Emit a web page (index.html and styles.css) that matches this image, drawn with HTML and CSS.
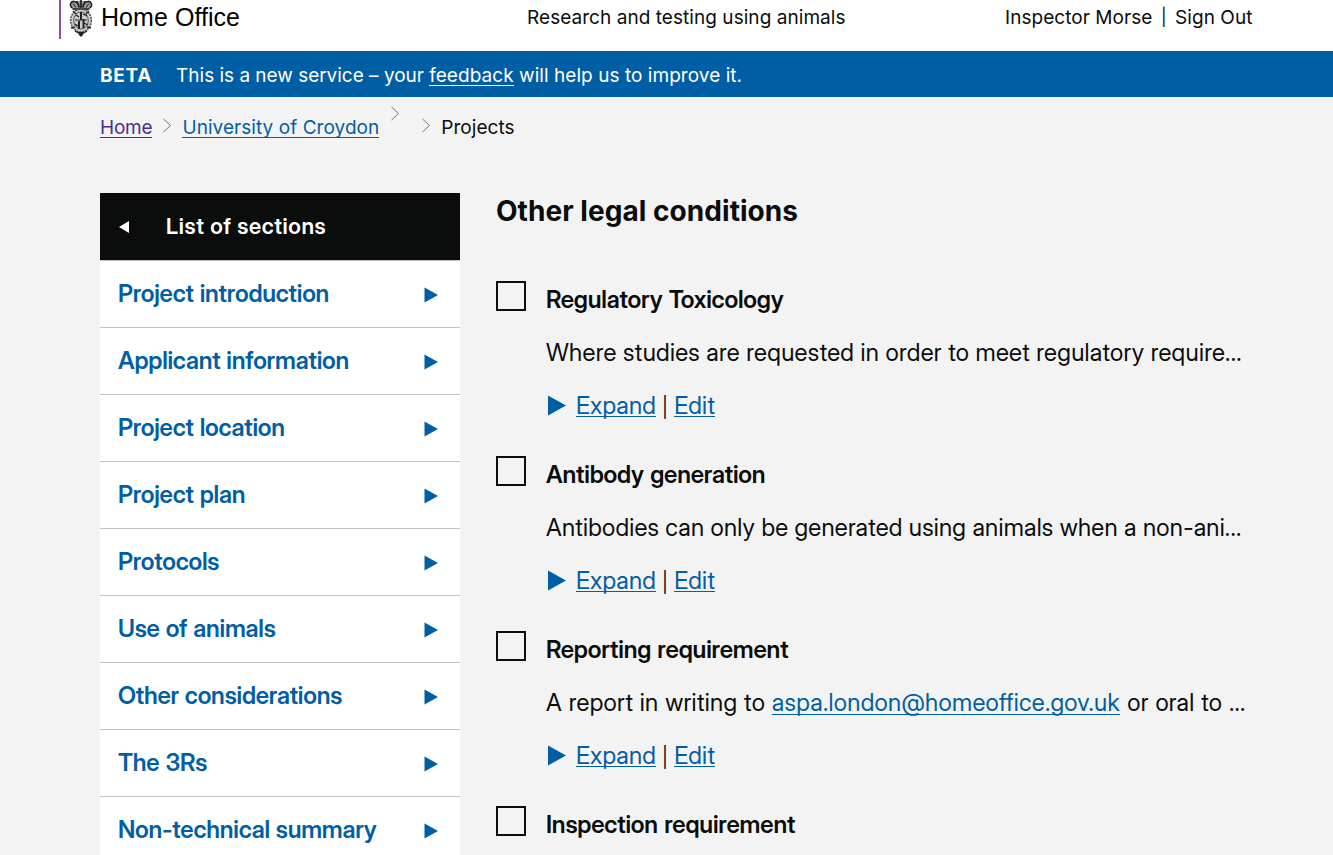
FILE: index.html
```html
<!DOCTYPE html>
<html lang="en">
<head>
<meta charset="utf-8">
<title>Projects - Research and testing using animals</title>
<link rel="stylesheet" href="styles.css">
</head>
<body>
<header class="header">
  <div class="brand">
    <svg class="crest" width="24" height="38" viewBox="0 0 24 38" aria-hidden="true">
      <path d="M2 1h20l-1 7-1 2H4L3 8z" fill="#999"/>
      <ellipse cx="12" cy="20.500" rx="10" ry="11.500" fill="#ccc"/>
      <g fill="none" stroke="#222" stroke-width="1">
        <path d="M3 8C0 5 2 1 5 1.500s5 3 5 6M21 8c3-3 1-7-2-6.500s-5 3-5 6M12 0v8M3.500 9h17" stroke-width="1.700"/>
        <path d="M4 3.500l3 4M8 1l2 6M16 1l-2 6M20 3.500l-3 4"/>
        <ellipse cx="12" cy="20.500" rx="10.300" ry="11.500" stroke="#555" stroke-width="1.600" stroke-dasharray="2 .8"/>
        <ellipse cx="12" cy="20.500" rx="7.300" ry="8.500" stroke="#555"/>
        <path d="M12 12v8M10 21v8M14.500 19v9" stroke-width="2"/>
        <path d="M6 20h12M7 15l3 2M14 14l4 2M6 24l3 2M15 23l4 2" stroke-width="1.200"/>
        <path d="M4 11l3 3M20 11l-3 3M2 28l4-1M22 28l-4-1M6 31c4 3 8 3 12 0" stroke-width="1.400"/>
      </g>
      <path d="M9 32h6l-1 3-2 2-2-2z" fill="#222"/>
    </svg>
    <span class="brand-name">Home Office</span>
  </div>
  <div class="service">Research and testing using animals</div>
  <div class="user"><span>Inspector Morse</span><span class="bar">|</span><span>Sign Out</span></div>
</header>
<div class="phase"><strong class="phase-tag">BETA</strong><span class="phase-text"><span class="phase-lead">This is a new service – your </span><a class="link link-light" href="#">feedback</a> will help us to improve it.</span></div>
<nav class="crumbs">
  <a class="link link-visited" href="#">Home</a>
  <svg class="chev chev-1" width="9" height="15" viewBox="0 0 9 15"><path d="M.5 1l7 6.500-7 6.500"/></svg>
  <a class="link" href="#">University of Croydon</a>
  <svg class="chev chev-2" width="9" height="15" viewBox="0 0 9 15"><path d="M.5 1l7 6.500-7 6.500"/></svg>
  <svg class="chev chev-3" width="9" height="15" viewBox="0 0 9 15"><path d="M.5 1l7 6.500-7 6.500"/></svg>
  <span>Projects</span>
</nav>
<div class="columns">
  <nav class="sections">
    <a class="sections-head" href="#"><svg width="10" height="12" viewBox="0 0 10 12"><path d="M10 0v12L0 6z"/></svg><span>List of sections</span></a>
    <a class="section" href="#"><span>Project introduction</span><svg width="14" height="16" viewBox="0 0 14 16"><path d="M.5 .5v15L14 8z"/></svg></a>
    <a class="section" href="#"><span>Applicant information</span><svg width="14" height="16" viewBox="0 0 14 16"><path d="M.5 .5v15L14 8z"/></svg></a>
    <a class="section" href="#"><span>Project location</span><svg width="14" height="16" viewBox="0 0 14 16"><path d="M.5 .5v15L14 8z"/></svg></a>
    <a class="section" href="#"><span>Project plan</span><svg width="14" height="16" viewBox="0 0 14 16"><path d="M.5 .5v15L14 8z"/></svg></a>
    <a class="section" href="#"><span>Protocols</span><svg width="14" height="16" viewBox="0 0 14 16"><path d="M.5 .5v15L14 8z"/></svg></a>
    <a class="section" href="#"><span>Use of animals</span><svg width="14" height="16" viewBox="0 0 14 16"><path d="M.5 .5v15L14 8z"/></svg></a>
    <a class="section" href="#"><span>Other considerations</span><svg width="14" height="16" viewBox="0 0 14 16"><path d="M.5 .5v15L14 8z"/></svg></a>
    <a class="section" href="#"><span>The 3Rs</span><svg width="14" height="16" viewBox="0 0 14 16"><path d="M.5 .5v15L14 8z"/></svg></a>
    <a class="section" href="#"><span>Non-technical summary</span><svg width="14" height="16" viewBox="0 0 14 16"><path d="M.5 .5v15L14 8z"/></svg></a>
  </nav>
  <main class="main">
    <h1 class="title">Other legal conditions</h1>
    <section class="condition">
      <span class="box" role="checkbox" aria-checked="false"></span>
      <div class="body">
        <h2 class="name">Regulatory Toxicology</h2>
        <p class="text">Where studies are requested in order to meet regulatory require...</p>
        <p class="actions"><svg width="18" height="21" viewBox="0 0 18 21"><path d="M0 .5v20l18-10z"/></svg><a class="link" href="#">Expand</a><span class="bar">|</span><a class="link" href="#">Edit</a></p>
      </div>
    </section>
    <section class="condition">
      <span class="box" role="checkbox" aria-checked="false"></span>
      <div class="body">
        <h2 class="name">Antibody generation</h2>
        <p class="text text-tight">Antibodies can only be generated using animals when a non-ani...</p>
        <p class="actions"><svg width="18" height="21" viewBox="0 0 18 21"><path d="M0 .5v20l18-10z"/></svg><a class="link" href="#">Expand</a><span class="bar">|</span><a class="link" href="#">Edit</a></p>
      </div>
    </section>
    <section class="condition">
      <span class="box" role="checkbox" aria-checked="false"></span>
      <div class="body">
        <h2 class="name">Reporting requirement</h2>
        <p class="text text-loose">A report in writing to <a class="link" href="#">aspa.london@homeoffice.gov.uk</a> or oral to ...</p>
        <p class="actions"><svg width="18" height="21" viewBox="0 0 18 21"><path d="M0 .5v20l18-10z"/></svg><a class="link" href="#">Expand</a><span class="bar">|</span><a class="link" href="#">Edit</a></p>
      </div>
    </section>
    <section class="condition condition-last">
      <span class="box" role="checkbox" aria-checked="false"></span>
      <div class="body">
        <h2 class="name">Inspection requirement</h2>
      </div>
    </section>
  </main>
</div>
</body>
</html>
```
FILE: styles.css
```css
* { box-sizing: border-box; }
body {
  margin: 0;
  height: 855px;
  overflow: hidden;
  background: #f3f3f3;
  color: #0b0c0c;
  font-family: Inter, "Liberation Sans", sans-serif;
  font-size: 19px;
  line-height: 25px;
  letter-spacing: .05px;
}
h1, h2, p { margin: 0; }
svg { display: block; flex: none; }
.link { color: #005ea5; text-decoration: none; border-bottom: 1px solid currentColor; display: inline-block; line-height: 18px; white-space: nowrap; }
.link-light { color: #fff; }
.link-visited { color: #4c2c92; letter-spacing: -.2px; }

.header {
  height: 51px;
  background: #fff;
  display: grid;
  grid-template-columns: 468px 478px 1fr;
  padding-left: 59px;
}
.brand { display: flex; height: 39px; border-left: 2px solid #8f4bae; padding-left: 8px; }
.brand-name { font: 25px/35px "Liberation Sans", Arial, sans-serif; color: #000; margin-left: 8px; white-space: nowrap; }
.service, .user { padding-top: 5px; white-space: nowrap; }
.user { display: flex; gap: 8.5px; }
.user .bar { font-size: 17px; }

.phase { height: 46px; background: #005ea5; color: #fff; padding: 12px 0 0 100px; display: flex; gap: 24px; white-space: nowrap; }
.phase-tag { letter-spacing: .7px; font-weight: 700; }
.phase-lead { letter-spacing: -.02px; }

.crumbs { display: flex; align-items: flex-start; height: 96px; padding: 22px 0 0 100px; }
.crumbs .link, .crumbs span { line-height: 18px; }
.chev path { fill: none; stroke: #6f777b; stroke-width: 1; }
.chev-1 { margin: -1px 10px 0 11px; }
.chev-2 { margin: -13px 22px 0 12px; }
.chev-3 { margin: -1px 10px 0 0; }

.columns { display: grid; grid-template-columns: 360px 760px; gap: 36px; padding-left: 100px; height: 662px; overflow: hidden; }
.sections { background: #fff; font-family: "Inter Display", Inter, sans-serif; font-weight: 600; height: 670px; }
.sections a { text-decoration: none; display: flex; align-items: center; height: 67px; }
.sections-head { background: #0b0c0c; color: #fff; font-size: 22px; letter-spacing: .6px; gap: 37px; padding-left: 19px; }
.sections-head svg { fill: #fff; margin-top: 1px; }
.section { color: #005ea5; font-size: 24px; letter-spacing: -.22px; word-spacing: .8px; border-top: 1px solid #bfc1c3; justify-content: space-between; padding: 0 22px 0 18px; }
.section span { margin-bottom: 2px; }
.section svg { fill: #005ea5; margin-top: 2px; }

.title { font-size: 28px; line-height: 36px; font-weight: 700; margin-bottom: 52px; }
.condition { display: flex; gap: 20px; height: 175px; }
.condition-last { height: 49px; }
.box { width: 30px; height: 30px; border: 2px solid #0b0c0c; flex: none; }
.body { font-family: "Inter Display", Inter, sans-serif; font-size: 24px; line-height: 30px; }
.name { font-size: 24px; font-weight: 600; letter-spacing: -.18px; word-spacing: 1px; padding-top: 4px; margin-bottom: 23px; }
.text, .actions { white-space: nowrap; letter-spacing: .3px; }
.text { margin-bottom: 23px; }
.text-tight { letter-spacing: .24px; }
.text-loose { word-spacing: .4px; }
.text-loose .link { margin-right: .6px; }
.text .link, .actions .link { line-height: 22px; }
.actions { display: flex; align-items: baseline; padding-top: 1px; letter-spacing: .2px; }
.actions .link { line-height: 21px; }
.actions svg { fill: #005ea5; margin: -3px 10px 0 2px; align-self: center; }
.actions .bar { font-size: 20px; margin: 0 6px; }
```
